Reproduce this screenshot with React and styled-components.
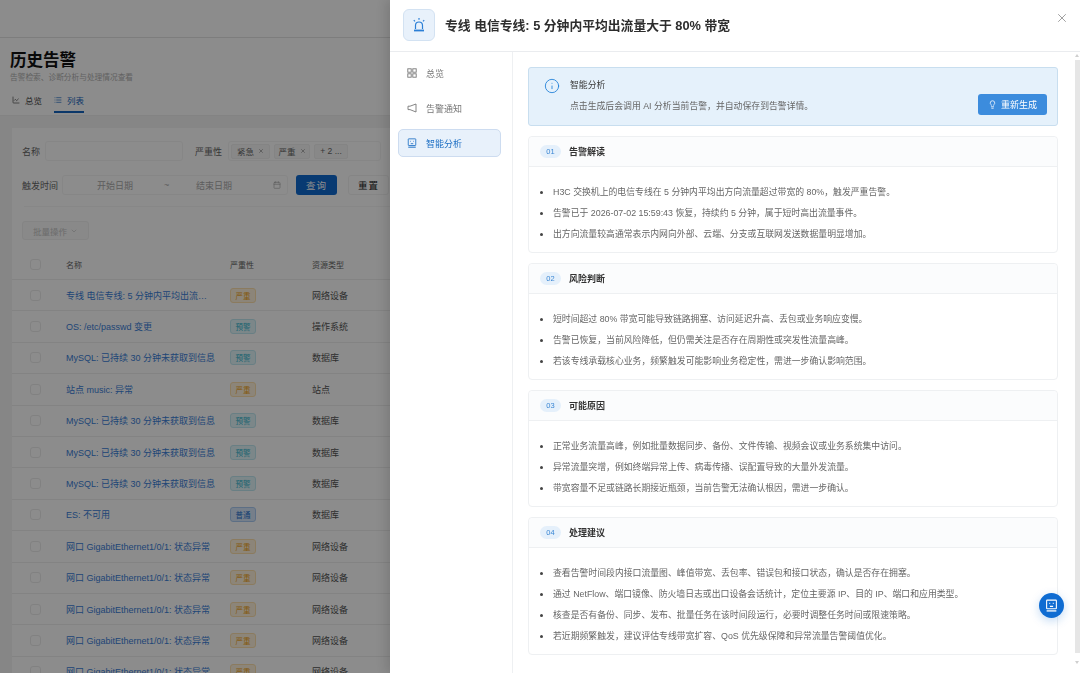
import React from "react";
import styled, { createGlobalStyle } from "styled-components";
import { ChevronDown, LineChart, List, Calendar, X, Info, Lightbulb } from "lucide-react";

const SANS = `"Liberation Sans", "Noto Sans CJK SC", sans-serif`;

const GlobalStyle = createGlobalStyle`
  html, body {
    margin: 0;
    padding: 0;
    height: 100%;
    overflow: hidden;
    background: #f5f5f5;
    font-family: ${SANS};
  }
  * {
    box-sizing: border-box;
  }
`;

const Page = styled.div`
  position: relative;
  width: 1080px;
  height: 673px;
  overflow: hidden;
`;

/* ---------- page behind the drawer ---------- */

const Background = styled.div`
  width: 1080px;
  height: 673px;
  display: flex;
  flex-direction: column;
`;

const TopBar = styled.div`
  height: 38px;
  flex: none;
  background: #fff;
  border-bottom: 1px solid #e4e4e4;
`;

const PageHead = styled.div`
  height: 78px;
  flex: none;
  padding: 12px 10px 0;
  background: #fff;
  border-bottom: 1px solid #eee;
`;

const PageTitle = styled.h1`
  margin: 0;
  font-size: 16.5px;
  line-height: 20px;
  font-weight: 700;
  color: #111;
`;

const PageSub = styled.div`
  margin-top: 2px;
  font-size: 7.7px;
  line-height: 12px;
  color: #b0b0b0;
`;

const Tabs = styled.div`
  display: flex;
  gap: 12px;
  margin-top: 9px;
  padding-left: 2px;
`;

const Tab = styled.div`
  display: flex;
  align-items: center;
  gap: 5px;
  height: 20px;
  padding-bottom: 4px;
  font-size: 8.5px;
  color: ${(p) => (p.$active ? "#1565c0" : "#444")};
  border-bottom: 2px solid ${(p) => (p.$active ? "#1565c0" : "transparent")};
`;

const Content = styled.div`
  flex: 1;
  padding: 12px 0 0 12px;
  min-height: 0;
`;

const Card = styled.div`
  height: 100%;
  background: #fff;
  padding-top: 13px;
`;

const FilterRow = styled.div`
  display: flex;
  align-items: center;
  height: 20px;
  padding-left: 10px;
  margin-bottom: 14px;
  font-size: 9px;
  color: #666;
`;

const FilterLabel = styled.span`
  width: ${(p) => p.$w}px;
  flex: none;
`;

const Field = styled.div`
  width: ${(p) => p.$w}px;
  height: 20px;
  flex: none;
  margin-right: ${(p) => p.$mr || 0}px;
  border: 1px solid #f5f5f5;
  border-radius: 3px;
  display: flex;
  align-items: center;
  gap: 4px;
  padding-left: 2px;
`;

const Chip = styled.span`
  display: flex;
  align-items: center;
  justify-content: center;
  gap: 4px;
  height: 15px;
  width: ${(p) => p.$w}px;
  background: #f8f8f8;
  border: 1px solid #f1f1f1;
  border-radius: 2px;
  font-size: 8.5px;
  color: #666;
`;

const RangeText = styled.span`
  width: ${(p) => p.$w}px;
  padding-left: ${(p) => p.$pl || 0}px;
  flex: none;
  color: #aaa;
  font-size: 9px;
`;

const QueryButton = styled.div`
  width: 41px;
  height: 20px;
  flex: none;
  margin-left: 8px;
  background: #0f6ad0;
  color: #fff;
  border-radius: 3px;
  display: flex;
  align-items: center;
  justify-content: center;
  font-size: 9.5px;
  letter-spacing: 1px;
`;

const ResetButton = styled(QueryButton)`
  margin-left: 11px;
  background: #fff;
  color: #222;
  border: 1px solid #f3f3f3;
`;

const Divider = styled.div`
  height: 1px;
  margin: -3px 0 14px 12px;
  background: #f6f6f6;
`;

const BatchButton = styled.div`
  margin-left: 10px;
  width: 67px;
  height: 19px;
  display: flex;
  align-items: center;
  justify-content: center;
  gap: 3px;
  background: #fafafa;
  border: 1px solid #f0f0f0;
  border-radius: 3px;
  color: #c4c4c4;
  font-size: 8.5px;
`;

const TableRow = styled.div`
  display: grid;
  grid-template-columns: 54px 164px 82px 1fr;
  align-items: center;
  height: 31.4px;
  border-bottom: 1px solid #efefef;
  font-size: 9px;
  color: #555;
`;

const TableHead = styled(TableRow)`
  margin-top: 9px;
  font-size: 8px;
  height: 31px;
  color: #666;
`;

const Check = styled.span`
  width: 11px;
  height: 11px;
  margin-left: 18px;
  border: 1px solid #ececec;
  border-radius: 3px;
  background: #fff;
`;

const NameLink = styled.span`
  color: #3a80d8;
  white-space: nowrap;
  overflow: hidden;
  text-overflow: ellipsis;
  padding-right: 14px;
`;

const SEVERITY = {
  严重: { bg: "#fff3dc", border: "#fde0ad", color: "#f0a31c" },
  预警: { bg: "#e2f6fa", border: "#bfe8f0", color: "#2fb3cc" },
  普通: { bg: "#d8e8fb", border: "#a9cbf3", color: "#2672cf" },
};

const SeverityTag = styled.span`
  width: 26px;
  height: 15px;
  display: flex;
  align-items: center;
  justify-content: center;
  border-radius: 3px;
  font-size: 7.5px;
  background: ${(p) => SEVERITY[p.$level].bg};
  border: 1px solid ${(p) => SEVERITY[p.$level].border};
  color: ${(p) => SEVERITY[p.$level].color};
`;

const Mask = styled.div`
  position: absolute;
  inset: 0;
  background: rgba(0, 0, 0, 0.45);
  backdrop-filter: blur(0.7px);
`;

/* ---------- drawer ---------- */

const Drawer = styled.aside`
  position: absolute;
  top: 0;
  right: 0;
  bottom: 0;
  width: 690px;
  background: #fff;
  box-shadow: -4px 0 10px rgba(0, 0, 0, 0.12);
  display: flex;
  flex-direction: column;
`;

const DrawerHead = styled.header`
  height: 52px;
  flex: none;
  display: flex;
  align-items: center;
  gap: 10px;
  padding: 0 13px 2px;
  border-bottom: 1px solid #eaecef;
`;

const HeadIcon = styled.div`
  width: 32px;
  height: 32px;
  flex: none;
  display: flex;
  align-items: center;
  justify-content: center;
  background: #e8f1fb;
  border: 1px solid #d3e2f2;
  border-radius: 6px;
  color: #2b7fd6;
`;

const DrawerTitle = styled.h2`
  flex: 1;
  margin: 0;
  font-size: 12.8px;
  font-weight: 700;
  color: #2d2d2d;
`;

const CloseButton = styled.div`
  color: #777;
  display: flex;
  margin: -13px -2px 0 0;
`;

const DrawerBody = styled.div`
  flex: 1;
  min-height: 0;
  display: flex;
`;

const SideNav = styled.nav`
  width: 123px;
  flex: none;
  padding: 7px 11px 7px 8px;
  border-right: 1px solid #eef0f2;
  display: flex;
  flex-direction: column;
  gap: 7px;
`;

const NavItem = styled.div`
  height: 28px;
  display: flex;
  align-items: center;
  gap: 9px;
  padding-left: 8px;
  border-radius: 5px;
  font-size: 9px;
  color: ${(p) => (p.$active ? "#1d6fc4" : "#777")};
  background: ${(p) => (p.$active ? "#e8f1fb" : "transparent")};
  border: 1px solid ${(p) => (p.$active ? "#cddcf0" : "transparent")};
`;

const Main = styled.main`
  flex: 1;
  min-width: 0;
  padding: 15px 22px 0 15px;
  display: flex;
  flex-direction: column;
  gap: 10px;
`;

const Notice = styled.section`
  height: 59px;
  flex: none;
  display: flex;
  gap: 10px;
  padding: 10px 10px 10px 15px;
  background: #e5f1fb;
  border: 1px solid #c8deef;
  border-radius: 3px;
`;

const NoticeIcon = styled.div`
  color: #1f7fd8;
  display: flex;
  height: 16px;
  flex: none;
`;

const NoticeText = styled.div`
  flex: 1;
  font-size: 8.85px;
  line-height: 14px;
`;

const NoticeTitle = styled.div`
  color: #3a3a3a;
`;

const NoticeDesc = styled.div`
  margin-top: 6.5px;
  color: #666;
`;

const RegenButton = styled.div`
  align-self: flex-end;
  width: 69px;
  height: 21px;
  display: flex;
  align-items: center;
  justify-content: center;
  gap: 4px;
  background: #3c8cdd;
  color: #fff;
  border-radius: 3px;
  font-size: 9px;
`;

const Section = styled.section`
  flex: none;
  border: 1px solid #eef0f2;
  border-radius: 4px;
  background: #fff;
`;

const SectionHead = styled.div`
  height: 30px;
  display: flex;
  align-items: center;
  gap: 8px;
  padding-left: 11px;
  background: #fbfcfd;
  border-bottom: 1px solid #eef0f2;
  border-radius: 4px 4px 0 0;
`;

const SectionNo = styled.span`
  width: 21px;
  height: 13px;
  border-radius: 7px;
  background: #e5f0fb;
  color: #3a86d4;
  font-size: 7.5px;
  display: flex;
  align-items: center;
  justify-content: center;
`;

const SectionTitle = styled.span`
  font-size: 9px;
  font-weight: 700;
  color: #333;
`;

const Points = styled.ul`
  margin: 0;
  padding: 14px 0 8px 24px;
  list-style: disc;
  font-size: 8.85px;
  line-height: 21px;
  color: #666;
  li {
    height: 21px;
  }
  li::marker {
    color: #444;
    font-size: 11px;
  }
`;

const Scrollbar = styled.div`
  position: absolute;
  top: 60px;
  right: 0;
  bottom: 20px;
  width: 5px;
  background: #e6e6e6;
  &::before,
  &::after {
    content: "";
    position: absolute;
    left: 0;
    border-left: 2.5px solid transparent;
    border-right: 2.5px solid transparent;
  }
  &::before {
    top: -6px;
    border-bottom: 3px solid #cfcfcf;
  }
  &::after {
    bottom: -11px;
    border-top: 3px solid #cfcfcf;
  }
`;

const FloatButton = styled.div`
  position: absolute;
  left: 649px;
  top: 593px;
  width: 25px;
  height: 25px;
  border-radius: 50%;
  background: #0f6cd2;
  color: #fff;
  display: flex;
  align-items: center;
  justify-content: center;
  box-shadow: 0 3px 10px rgba(15, 108, 210, 0.25);
`;

/* ---------- drawings ---------- */

const SirenIcon = () => (
  <svg width="16" height="16" viewBox="0 0 16 16" fill="none" stroke="currentColor" strokeWidth="1.2">
    <path d="M4.5 12V8.5a3.5 3.5 0 0 1 7 0V12" />
    <path d="M3 13.5h10" strokeWidth="1.8" />
    <path d="M8 1v1.8M2.8 3.2l1.2 1.2M13.2 3.2L12 4.4" />
  </svg>
);

const GridIcon = () => (
  <svg width="10" height="10" viewBox="0 0 10 10" fill="none" stroke="currentColor" strokeWidth="0.9">
    <rect x="0.8" y="0.8" width="3.4" height="3.4" />
    <rect x="5.8" y="0.8" width="3.4" height="3.4" />
    <rect x="0.8" y="5.8" width="3.4" height="3.4" />
    <rect x="5.8" y="5.8" width="3.4" height="3.4" />
  </svg>
);

const HornIcon = () => (
  <svg width="10" height="10" viewBox="0 0 10 10" fill="none" stroke="currentColor" strokeWidth="0.9">
    <path d="M9 1L3 3.2H1v3.4h2L9 9z" strokeLinejoin="round" />
  </svg>
);

const ReportIcon = ({ size = 10 }) => (
  <svg width={size} height={size} viewBox="0 0 12 12" fill="none" stroke="currentColor" strokeWidth="1">
    <rect x="1.5" y="1" width="9" height="8" rx="0.5" />
    <path d="M4 4h.8M7.2 4H8M4.5 6.8h3" />
    <path d="M1.5 11h9" strokeWidth="1.2" />
  </svg>
);

/* ---------- data ---------- */

const MYSQL = "MySQL: 已持续 30 分钟未获取到信息";
const PORT = "网口 GigabitEthernet1/0/1: 状态异常";

const ALERTS = [
  ["专线 电信专线: 5 分钟内平均出流量大于 80% 带宽", "严重", "网络设备"],
  ["OS: /etc/passwd 变更", "预警", "操作系统"],
  [MYSQL, "预警", "数据库"],
  ["站点 music: 异常", "严重", "站点"],
  [MYSQL, "预警", "数据库"],
  [MYSQL, "预警", "数据库"],
  [MYSQL, "预警", "数据库"],
  ["ES: 不可用", "普通", "数据库"],
  [PORT, "严重", "网络设备"],
  [PORT, "严重", "网络设备"],
  [PORT, "严重", "网络设备"],
  [PORT, "严重", "网络设备"],
  [PORT, "严重", "网络设备"],
];

const SECTIONS = [
  {
    no: "01",
    title: "告警解读",
    points: [
      "H3C 交换机上的电信专线在 5 分钟内平均出方向流量超过带宽的 80%，触发严重告警。",
      "告警已于 2026-07-02 15:59:43 恢复，持续约 5 分钟，属于短时高出流量事件。",
      "出方向流量较高通常表示内网向外部、云端、分支或互联网发送数据量明显增加。",
    ],
  },
  {
    no: "02",
    title: "风险判断",
    points: [
      "短时间超过 80% 带宽可能导致链路拥塞、访问延迟升高、丢包或业务响应变慢。",
      "告警已恢复，当前风险降低，但仍需关注是否存在周期性或突发性流量高峰。",
      "若该专线承载核心业务，频繁触发可能影响业务稳定性，需进一步确认影响范围。",
    ],
  },
  {
    no: "03",
    title: "可能原因",
    points: [
      "正常业务流量高峰，例如批量数据同步、备份、文件传输、视频会议或业务系统集中访问。",
      "异常流量突增，例如终端异常上传、病毒传播、误配置导致的大量外发流量。",
      "带宽容量不足或链路长期接近瓶颈，当前告警无法确认根因，需进一步确认。",
    ],
  },
  {
    no: "04",
    title: "处理建议",
    points: [
      "查看告警时间段内接口流量图、峰值带宽、丢包率、错误包和接口状态，确认是否存在拥塞。",
      "通过 NetFlow、端口镜像、防火墙日志或出口设备会话统计，定位主要源 IP、目的 IP、端口和应用类型。",
      "核查是否有备份、同步、发布、批量任务在该时间段运行，必要时调整任务时间或限速策略。",
      "若近期频繁触发，建议评估专线带宽扩容、QoS 优先级保障和异常流量告警阈值优化。",
    ],
  },
];

const App = () => (
  <Page>
    <GlobalStyle />
    <Background>
      <TopBar />
      <PageHead>
        <PageTitle>历史告警</PageTitle>
        <PageSub>告警检索、诊断分析与处理情况查看</PageSub>
        <Tabs>
          <Tab>
            <LineChart size={8} />
            总览
          </Tab>
          <Tab $active>
            <List size={8} />
            列表
          </Tab>
        </Tabs>
      </PageHead>
      <Content>
        <Card>
          <FilterRow>
            <FilterLabel $w={23}>名称</FilterLabel>
            <Field $w={138} $mr={12} />
            <FilterLabel $w={33}>严重性</FilterLabel>
            <Field $w={153}>
              <Chip $w={39}>
                紧急 <X size={6} />
              </Chip>
              <Chip $w={36}>
                严重 <X size={6} />
              </Chip>
              <Chip $w={34}>+ 2 ...</Chip>
            </Field>
          </FilterRow>
          <FilterRow>
            <FilterLabel $w={40}>触发时间</FilterLabel>
            <Field $w={226}>
              <RangeText $w={95} $pl={32}>
                开始日期
              </RangeText>
              <RangeText $w={28}>~</RangeText>
              <RangeText $w={73}>结束日期</RangeText>
              <Calendar size={8} color="#aaa" />
            </Field>
            <QueryButton>查询</QueryButton>
            <ResetButton>重置</ResetButton>
          </FilterRow>
          <Divider />
          <BatchButton>
            批量操作 <ChevronDown size={8} />
          </BatchButton>
          <TableHead>
            <Check />
            <span>名称</span>
            <span>严重性</span>
            <span>资源类型</span>
          </TableHead>
          {ALERTS.map(([name, level, type], i) => (
            <TableRow key={i}>
              <Check />
              <NameLink>{name}</NameLink>
              <SeverityTag $level={level}>{level}</SeverityTag>
              <span>{type}</span>
            </TableRow>
          ))}
        </Card>
      </Content>
    </Background>
    <Mask />
    <Drawer>
      <DrawerHead>
        <HeadIcon>
          <SirenIcon />
        </HeadIcon>
        <DrawerTitle>专线 电信专线: 5 分钟内平均出流量大于 80% 带宽</DrawerTitle>
        <CloseButton>
          <X size={14} strokeWidth={1.2} />
        </CloseButton>
      </DrawerHead>
      <DrawerBody>
        <SideNav>
          <NavItem>
            <GridIcon />
            总览
          </NavItem>
          <NavItem>
            <HornIcon />
            告警通知
          </NavItem>
          <NavItem $active>
            <ReportIcon />
            智能分析
          </NavItem>
        </SideNav>
        <Main>
          <Notice>
            <NoticeIcon>
              <Info size={16} strokeWidth={1.3} />
            </NoticeIcon>
            <NoticeText>
              <NoticeTitle>智能分析</NoticeTitle>
              <NoticeDesc>点击生成后会调用 AI 分析当前告警，并自动保存到告警详情。</NoticeDesc>
            </NoticeText>
            <RegenButton>
              <Lightbulb size={9} />
              重新生成
            </RegenButton>
          </Notice>
          {SECTIONS.map((section) => (
            <Section key={section.no}>
              <SectionHead>
                <SectionNo>{section.no}</SectionNo>
                <SectionTitle>{section.title}</SectionTitle>
              </SectionHead>
              <Points>
                {section.points.map((point) => (
                  <li key={point}>{point}</li>
                ))}
              </Points>
            </Section>
          ))}
        </Main>
      </DrawerBody>
      <Scrollbar />
      <FloatButton>
        <ReportIcon size={13} />
      </FloatButton>
    </Drawer>
  </Page>
);

export default App;
